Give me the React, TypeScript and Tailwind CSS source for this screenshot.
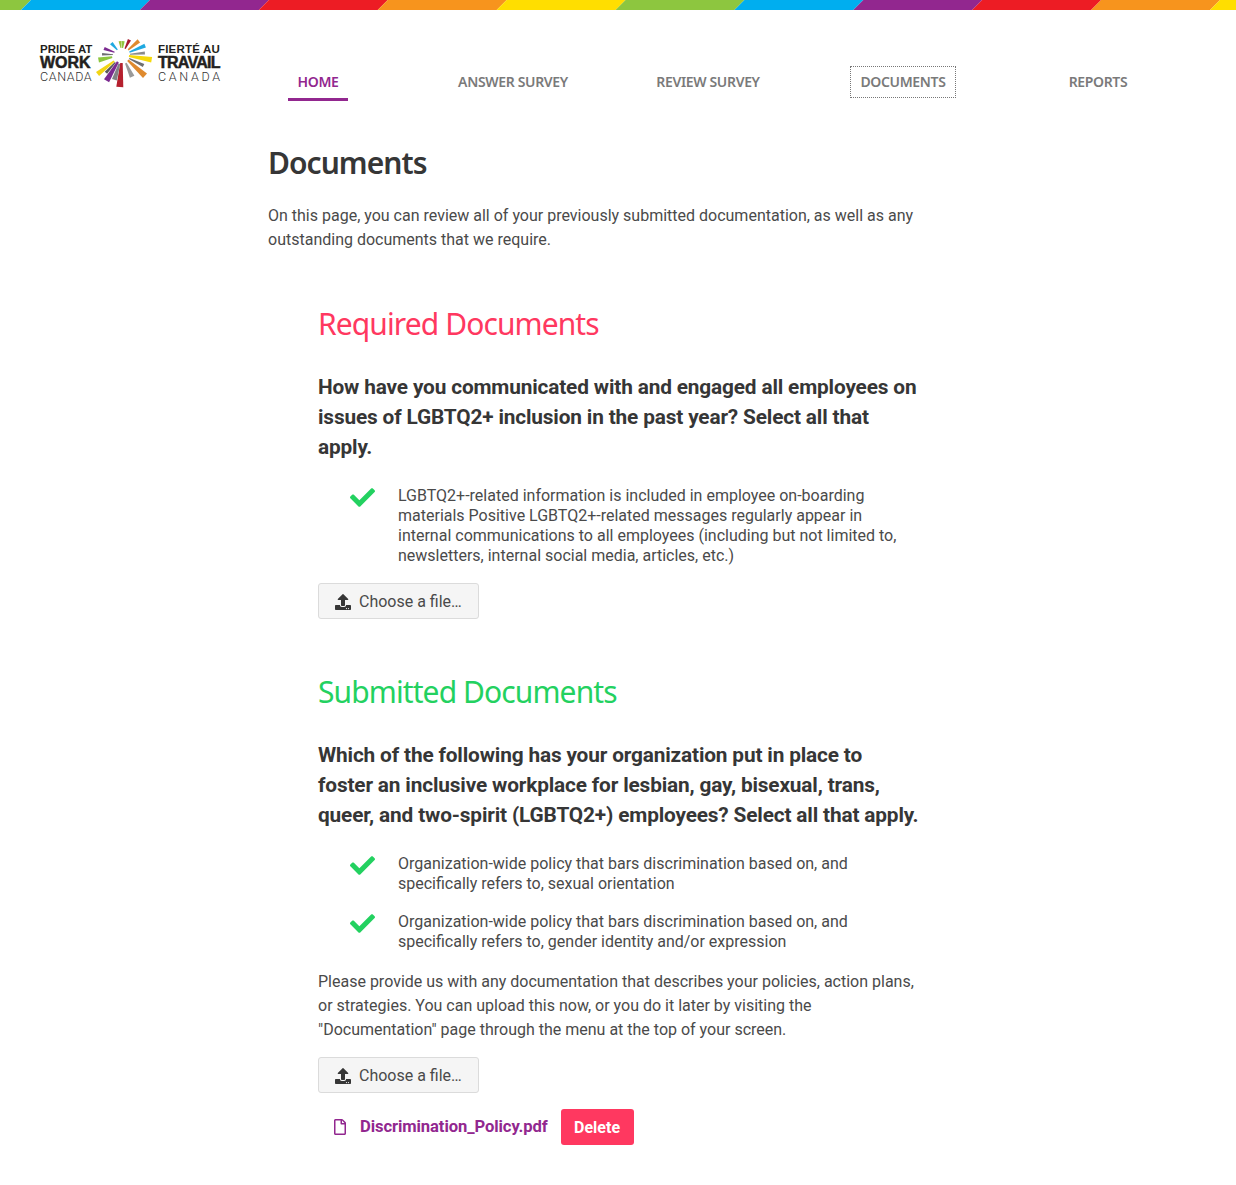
import { FaCheck, FaRegFile, FaUpload } from "react-icons/fa";

const STRIPE = ["#00aeef", "#92278f", "#ed1c24", "#f7941d", "#ffde00", "#8dc63f"];

// angle is degrees clockwise from north, radii in px from the hub
const RAYS: [number, number, number, number, string][] = [
  [5, 7, 14, 3, "#8dc63f"],
  [26, 7, 17, 3.5, "#a6192e"],
  [50, 8, 22, 4, "#e08a2e"],
  [68, 8, 25, 4, "#1fa9e1"],
  [85, 8, 23, 3, "#8a8a8a"],
  [99, 7, 30, 5.5, "#f5d90a"],
  [116, 8, 24, 3.5, "#6d6e71"],
  [132, 8, 31, 6, "#df8a2f"],
  [155, 9, 24, 5, "#9a9a9a"],
  [184, 8, 32, 7, "#b5202e"],
  [197, 9, 26, 5, "#808285"],
  [211, 8, 30, 6, "#7b2a90"],
  [222, 10, 24, 3, "#58595b"],
  [232, 10, 31, 5, "#f2d515"],
  [258, 10, 24, 5, "#8dc63f"],
  [272, 9, 20, 2.5, "#6d6e71"],
  [290, 8, 19, 3.5, "#7b2a90"],
  [318, 7, 16, 3.5, "#1fa9e1"],
  [352, 7, 14, 3, "#9bbf3b"],
];

function rayPoints(angle: number, r1: number, r2: number, w: number) {
  const a = (angle * Math.PI) / 180;
  const dx = Math.sin(a);
  const dy = -Math.cos(a);
  const px = -dy;
  const py = dx;
  const cx = 33;
  const cy = 33;
  const inner = w * 0.35;
  const pts = [
    [cx + dx * r1 + (px * inner) / 2, cy + dy * r1 + (py * inner) / 2],
    [cx + dx * r2 + (px * w) / 2, cy + dy * r2 + (py * w) / 2],
    [cx + dx * r2 - (px * w) / 2, cy + dy * r2 - (py * w) / 2],
    [cx + dx * r1 - (px * inner) / 2, cy + dy * r1 - (py * inner) / 2],
  ];
  return pts.map((p) => p.map((n) => n.toFixed(1)).join(",")).join(" ");
}

function RainbowStripe() {
  const bands = [];
  for (let i = -1; i < 11; i++) {
    const x = 21 + i * 118.9;
    bands.push(
      <polygon
        key={i}
        points={`${x},10 ${x + 10},0 ${x + 128.9},0 ${x + 118.9},10`}
        fill={STRIPE[(i + 6) % 6]}
      />
    );
  }
  return (
    <svg className="block h-[10px] w-full" viewBox="0 0 1236 10" preserveAspectRatio="none">
      {bands}
    </svg>
  );
}

function Logo() {
  return (
    <div className="flex w-[180px] shrink-0 items-start whitespace-nowrap text-[#231f20]">
      <div className="mt-[3px] flex w-[52px] flex-col font-['Liberation_Sans',sans-serif]">
        <span className="text-[11.5px] leading-[12px] font-bold">PRIDE AT</span>
        <span className="text-[16px] leading-[15px] font-bold [-webkit-text-stroke:0.5px_#231f20]">WORK</span>
        <span className="font-['Roboto',sans-serif] text-[12.5px] leading-[13px] font-light tracking-[0.6px] text-[#333]">CANADA</span>
      </div>
      <svg className="ml-[-3px] mt-[-18px] h-[66px] w-[66px] shrink-0" viewBox="0 0 66 66">
        {RAYS.map(([angle, r1, r2, w, color]) => (
          <polygon key={angle} points={rayPoints(angle, r1, r2, w)} fill={color} />
        ))}
      </svg>
      <div className="ml-[3px] mt-[3px] flex w-[62px] flex-col font-['Liberation_Sans',sans-serif]">
        <span className="text-[11.5px] leading-[12px] font-bold tracking-[0.2px]">FIERTÉ AU</span>
        <span className="text-[16px] leading-[15px] font-bold tracking-[-0.75px] [-webkit-text-stroke:0.5px_#231f20]">TRAVAIL</span>
        <span className="font-['Roboto',sans-serif] text-[12.5px] leading-[13px] font-light tracking-[2.7px] text-[#333]">CANADA</span>
      </div>
    </div>
  );
}

const NAV = ["Home", "Answer Survey", "Review Survey", "Documents", "Reports"];

function NavBar() {
  return (
    <nav className="ml-[0.5px] mt-[26px] grid w-[975px] grid-cols-5 font-['Noto_Sans',sans-serif] text-[14px] font-semibold uppercase tracking-[-0.34px]">
      {NAV.map((label) => (
        <div key={label} className="flex justify-center">
          {label === "Home" ? (
            <a className="h-[35px] border-b-[3px] border-[#92278f] px-[9px] pt-[5px] leading-[21px] text-[#92278f]">{label}</a>
          ) : label === "Documents" ? (
            <a className="h-[32px] border border-dotted border-[#777] px-[9px] pt-[4px] leading-[21px] text-[#7a7a7a]">{label}</a>
          ) : (
            <a className="h-[32px] px-[12px] pt-[5px] leading-[21px] text-[#7a7a7a]">{label}</a>
          )}
        </div>
      ))}
    </nav>
  );
}

function CheckItem({ children }: { children: React.ReactNode }) {
  return (
    <li className="flex items-start">
      <span className="flex h-[20px] w-[80px] shrink-0 justify-center pl-[8px]">
        <FaCheck className="mt-[-1px] h-[25px] w-[25px] shrink-0 text-[#23d160]" />
      </span>
      <span className="w-[510px] text-[16px] leading-[20px]">{children}</span>
    </li>
  );
}

function ChooseFile() {
  return (
    <button className="flex h-[36px] w-[161px] items-center rounded-[3px] border border-[#dbdbdb] bg-[#f5f5f5] pl-[16px] pt-[1px] text-[16px] text-[#4a4a4a]">
      <FaUpload className="mr-[8px] h-[16px] w-[16px] text-[#363636]" />
      Choose a file…
    </button>
  );
}

const sectionTitle = "font-['Noto_Sans',sans-serif] text-[30px] leading-[36px] tracking-[-0.9px]";
const question = "w-[602px] text-[20.8px] leading-[30px] font-bold tracking-[-0.15px] text-[#363636]";

export default function App() {
  return (
    <div className="min-h-[1185px] bg-white font-['Roboto',sans-serif] text-[#4a4a4a]">
      <RainbowStripe />
      <header className="flex pl-[40px] pt-[30px]">
        <Logo />
        <NavBar />
      </header>

      <main className="ml-[268px] w-[660px] pt-[42px]">
        <h1 className="font-['Noto_Sans',sans-serif] text-[30px] leading-[40px] font-semibold tracking-[-0.95px] text-[#363636]">Documents</h1>
        <p className="mt-[21px] w-[660px] text-[16px] leading-[24px]">
          On this page, you can review all of your previously submitted documentation, as well as any outstanding documents that we require.
        </p>

        <section className="ml-[50px] mt-[54px]">
          <h2 className={`${sectionTitle} text-[#ff3860]`}>Required Documents</h2>
          <h3 className={`mt-[30px] ${question}`}>
            How have you communicated with and engaged all employees on issues of LGBTQ2+ inclusion in the past year? Select all that apply.
          </h3>
          <ul className="mt-[24px]">
            <CheckItem>
              LGBTQ2+-related information is included in employee on-boarding materials Positive LGBTQ2+-related messages regularly appear in internal communications to all employees (including but not limited to, newsletters, internal social media, articles, etc.)
            </CheckItem>
          </ul>
          <div className="mt-[17px]">
            <ChooseFile />
          </div>
        </section>

        <section className="ml-[50px] mt-[55px]">
          <h2 className={`${sectionTitle} text-[#23d160]`}>Submitted Documents</h2>
          <h3 className={`mt-[30px] ${question}`}>
            Which of the following has your organization put in place to foster an inclusive workplace for lesbian, gay, bisexual, trans, queer, and two-spirit (LGBTQ2+) employees? Select all that apply.
          </h3>
          <ul className="mt-[24px] flex flex-col gap-[18px]">
            <CheckItem>Organization-wide policy that bars discrimination based on, and specifically refers to, sexual orientation</CheckItem>
            <CheckItem>Organization-wide policy that bars discrimination based on, and specifically refers to, gender identity and/or expression</CheckItem>
          </ul>
          <p className="mt-[18px] w-[610px] text-[16px] leading-[24px]">
            Please provide us with any documentation that describes your policies, action plans, or strategies. You can upload this now, or you do it later by visiting the "Documentation" page through the menu at the top of your screen.
          </p>
          <div className="mt-[15px]">
            <ChooseFile />
          </div>
          <div className="mt-[16px] flex items-center pl-[16px]">
            <FaRegFile className="h-[16px] w-[12px] text-[#92278f]" />
            <a className="ml-[14px] pt-[1px] text-[16.6px] font-bold tracking-[-0.09px] text-[#92278f]">Discrimination_Policy.pdf</a>
            <button className="ml-[13px] h-[36px] w-[73px] rounded-[3px] bg-[#ff3860] pt-[1px] text-[16px] font-bold text-white">Delete</button>
          </div>
        </section>
      </main>
    </div>
  );
}
